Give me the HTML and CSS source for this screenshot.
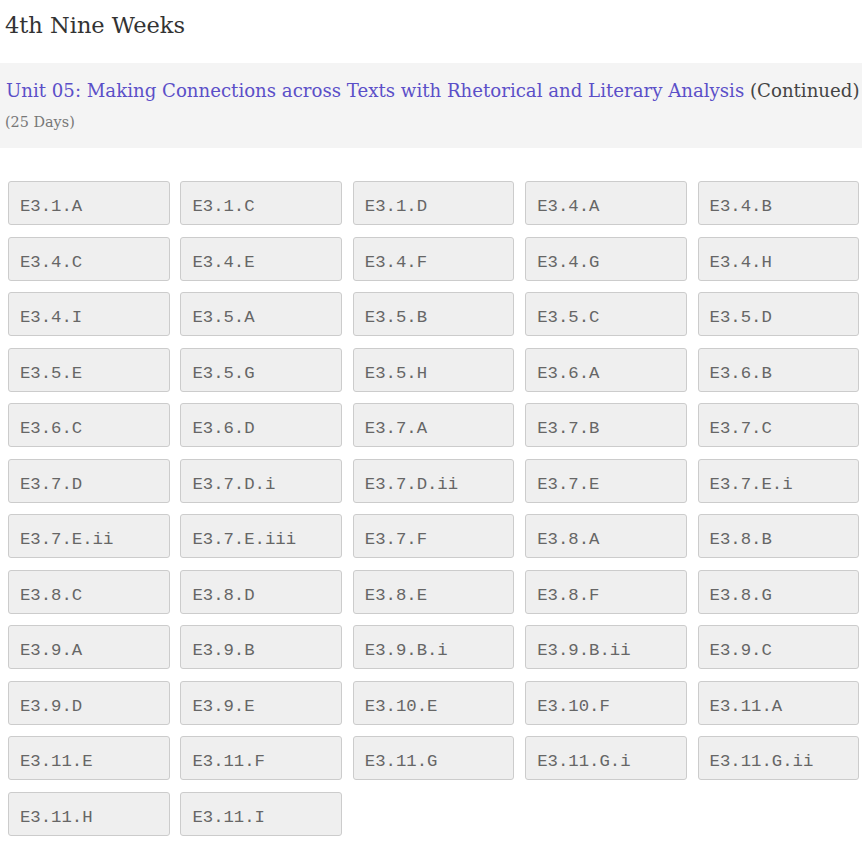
FILE: index.html
```html
<!DOCTYPE html>
<html>
<head>
<meta charset="utf-8">
<link rel="stylesheet" href="styles.css">
</head>
<body>
<h2 class="week">4th Nine Weeks</h2>
<div class="unit">
  <div class="unit-title"><a class="unit-link" href="#">Unit 05: Making Connections across Texts with Rhetorical and Literary Analysis</a> <span class="unit-note">(Continued)</span></div>
  <div class="unit-days">(25 Days)</div>
</div>
<div class="grid">
  <div class="std">E3.1.A</div><div class="std">E3.1.C</div><div class="std">E3.1.D</div><div class="std">E3.4.A</div><div class="std">E3.4.B</div>
  <div class="std">E3.4.C</div><div class="std">E3.4.E</div><div class="std">E3.4.F</div><div class="std">E3.4.G</div><div class="std">E3.4.H</div>
  <div class="std">E3.4.I</div><div class="std">E3.5.A</div><div class="std">E3.5.B</div><div class="std">E3.5.C</div><div class="std">E3.5.D</div>
  <div class="std">E3.5.E</div><div class="std">E3.5.G</div><div class="std">E3.5.H</div><div class="std">E3.6.A</div><div class="std">E3.6.B</div>
  <div class="std">E3.6.C</div><div class="std">E3.6.D</div><div class="std">E3.7.A</div><div class="std">E3.7.B</div><div class="std">E3.7.C</div>
  <div class="std">E3.7.D</div><div class="std">E3.7.D.i</div><div class="std">E3.7.D.ii</div><div class="std">E3.7.E</div><div class="std">E3.7.E.i</div>
  <div class="std">E3.7.E.ii</div><div class="std">E3.7.E.iii</div><div class="std">E3.7.F</div><div class="std">E3.8.A</div><div class="std">E3.8.B</div>
  <div class="std">E3.8.C</div><div class="std">E3.8.D</div><div class="std">E3.8.E</div><div class="std">E3.8.F</div><div class="std">E3.8.G</div>
  <div class="std">E3.9.A</div><div class="std">E3.9.B</div><div class="std">E3.9.B.i</div><div class="std">E3.9.B.ii</div><div class="std">E3.9.C</div>
  <div class="std">E3.9.D</div><div class="std">E3.9.E</div><div class="std">E3.10.E</div><div class="std">E3.10.F</div><div class="std">E3.11.A</div>
  <div class="std">E3.11.E</div><div class="std">E3.11.F</div><div class="std">E3.11.G</div><div class="std">E3.11.G.i</div><div class="std">E3.11.G.ii</div>
  <div class="std">E3.11.H</div><div class="std">E3.11.I</div>
</div>
</body>
</html>
```
FILE: styles.css
```css
html, body {
  margin: 0;
  padding: 0;
  background: #ffffff;
}
body {
  font-family: "DejaVu Serif", serif;
  color: #333333;
  overflow: hidden;
}
.week {
  margin: 0;
  padding: 0 0 0 5px;
  height: 63px;
  line-height: 50px;
  font-size: 22.5px;
  font-weight: normal;
  color: #333333;
  white-space: nowrap;
}
.unit {
  background: #f4f4f4;
  height: 85px;
  padding-left: 6px;
  box-sizing: border-box;
}
.unit-title {
  padding-top: 15px;
  line-height: 26px;
  font-size: 18.15px;
  white-space: nowrap;
}
.unit-link {
  color: #5b4fc8;
  text-decoration: none;
}
.unit-note {
  color: #444444;
}
.unit-days {
  margin-left: -1px;
  margin-top: 7px;
  line-height: 22px;
  font-size: 14.4px;
  color: #777777;
}
.grid {
  margin: 33px 0 0 8px;
  display: grid;
  grid-template-columns: repeat(5, 161.5px);
  column-gap: 10.9px;
  row-gap: 11.55px;
}
.std {
  height: 44px;
  box-sizing: border-box;
  border: 1px solid #cccccc;
  border-radius: 3px;
  background: #efefef;
  padding: 15px 0 0 11px;
  font-family: "Liberation Mono", monospace;
  font-size: 17.3px;
  line-height: 20px;
  color: #666666;
  white-space: nowrap;
}
```
